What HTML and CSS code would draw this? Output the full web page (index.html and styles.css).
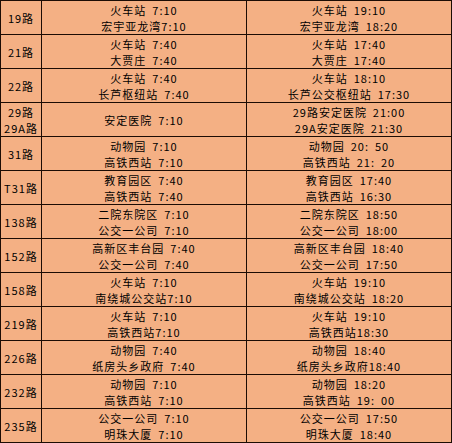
FILE: index.html
```html
<!DOCTYPE html>
<html lang="zh">
<head>
<meta charset="utf-8">
<link rel="stylesheet" href="styles.css">
</head>
<body>
<table class="bus">
  <colgroup>
    <col class="c-route">
    <col class="c-first">
    <col class="c-last">
  </colgroup>
  <tbody>
    <tr><td><div class="ln">19路</div></td><td><div class="ln">火车站 7:10</div><div class="ln">宏宇亚龙湾7:10</div></td><td><div class="ln">火车站 19:10</div><div class="ln">宏宇亚龙湾 18:20</div></td></tr>
    <tr><td><div class="ln">21路</div></td><td><div class="ln">火车站 7:40</div><div class="ln">大贾庄 7:40</div></td><td><div class="ln">火车站 17:40</div><div class="ln">大贾庄 17:40</div></td></tr>
    <tr><td><div class="ln">22路</div></td><td><div class="ln">火车站 7:40</div><div class="ln">长芦枢纽站 7:40</div></td><td><div class="ln">火车站 18:10</div><div class="ln">长芦公交枢纽站 17:30</div></td></tr>
    <tr><td><div class="ln">29路</div><div class="ln">29A路</div></td><td><div class="ln">安定医院 7:10</div></td><td><div class="ln">29路安定医院 21:00</div><div class="ln">29A安定医院 21:30</div></td></tr>
    <tr><td><div class="ln">31路</div></td><td><div class="ln">动物园 7:10</div><div class="ln">高铁西站 7:10</div></td><td><div class="ln">动物园 20: 50</div><div class="ln">高铁西站 21: 20</div></td></tr>
    <tr><td><div class="ln">T31路</div></td><td><div class="ln">教育园区 7:40</div><div class="ln">高铁西站 7:40</div></td><td><div class="ln">教育园区 17:40</div><div class="ln">高铁西站 16:30</div></td></tr>
    <tr><td><div class="ln">138路</div></td><td><div class="ln">二院东院区 7:10</div><div class="ln">公交一公司 7:10</div></td><td><div class="ln">二院东院区 18:50</div><div class="ln">公交一公司 18:00</div></td></tr>
    <tr><td><div class="ln">152路</div></td><td><div class="ln">高新区丰台园 7:40</div><div class="ln">公交一公司 7:40</div></td><td><div class="ln">高新区丰台园 18:40</div><div class="ln">公交一公司 17:50</div></td></tr>
    <tr><td><div class="ln">158路</div></td><td><div class="ln">火车站 7:10</div><div class="ln">南绕城公交站7:10</div></td><td><div class="ln">火车站 19:10</div><div class="ln">南绕城公交站 18:20</div></td></tr>
    <tr><td><div class="ln">219路</div></td><td><div class="ln">火车站 7:10</div><div class="ln">高铁西站7:10</div></td><td><div class="ln">火车站 19:10</div><div class="ln">高铁西站18:30</div></td></tr>
    <tr><td><div class="ln">226路</div></td><td><div class="ln">动物园 7:40</div><div class="ln">纸房头乡政府 7:40</div></td><td><div class="ln">动物园 18:40</div><div class="ln">纸房头乡政府18:40</div></td></tr>
    <tr><td><div class="ln">232路</div></td><td><div class="ln">动物园 7:10</div><div class="ln">高铁西站 7:10</div></td><td><div class="ln">动物园 18:20</div><div class="ln">高铁西站 19: 00</div></td></tr>
    <tr><td><div class="ln">235路</div></td><td><div class="ln">公交一公司 7:10</div><div class="ln">明珠大厦 7:10</div></td><td><div class="ln">公交一公司 17:50</div><div class="ln">明珠大厦 18:40</div></td></tr>
  </tbody>
</table>
</body>
</html>
```

FILE: styles.css
```css
html, body {
  margin: 0;
  padding: 0;
  background: #ffffff;
}

.bus {
  border-collapse: collapse;
  table-layout: fixed;
  width: 451px;
  background: #f4b084;
  font-family: "Noto Sans CJK SC", "Noto Sans", sans-serif;
  font-size: 11px;
  letter-spacing: 1px;
  word-spacing: 2.5px;
  color: #000000;
}

.c-route { width: 41px; }
.c-first { width: 205px; }
.c-last { width: 205px; }

.bus td {
  border: 1px solid #1c0c04;
  height: 33px;
  padding: 0;
  text-align: center;
  vertical-align: middle;
  white-space: nowrap;
}

.ln {
  height: 16px;
  line-height: 16px;
}
```
